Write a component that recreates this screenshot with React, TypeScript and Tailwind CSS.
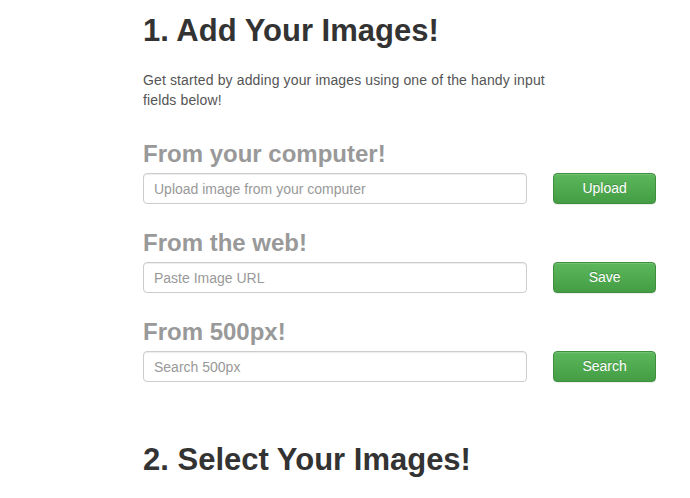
const sources = [
  { title: "From your computer!", placeholder: "Upload image from your computer", action: "Upload" },
  { title: "From the web!", placeholder: "Paste Image URL", action: "Save" },
  { title: "From 500px!", placeholder: "Search 500px", action: "Search" },
];

export default function App() {
  return (
    <div className="min-h-[498px] bg-white font-['Liberation_Sans',Arial,sans-serif] text-[14px] text-[#333]">
      <div className="ml-[143px] w-[513px] pt-[14px]">
        <h1 className="text-[31px] font-bold leading-[33px] text-[#333]">1. Add Your Images!</h1>

        <p className="mt-[23px] w-[425px] text-[14px] leading-[20px] tracking-[0.13px] text-[#555]">
          Get started by adding your images using one of the handy input fields below!
        </p>

        <div className="mt-[31px] flex flex-col gap-[26px]">
          {sources.map((s) => (
            <div key={s.action}>
              <h3 className="text-[24px] font-bold leading-[26px] text-[#999]">{s.title}</h3>
              <div className="mt-[6px] flex items-center gap-[26px]">
                <input
                  type="text"
                  placeholder={s.placeholder}
                  className="h-[31px] w-[385px] rounded-[4px] border border-[#ccc] px-[10px] text-[14px] text-[#555] shadow-[inset_0_1px_1px_rgba(0,0,0,0.075)] outline-none placeholder:text-[#999]"
                />
                <button className="h-[31px] w-[103px] rounded-[4px] border border-[#3e8f3e] bg-gradient-to-b from-[#5cb85c] to-[#449d44] text-[14px] text-white shadow-[inset_0_1px_0_rgba(255,255,255,0.15),0_1px_1px_rgba(0,0,0,0.075)] [text-shadow:0_-1px_0_rgba(0,0,0,0.2)]">
                  {s.action}
                </button>
              </div>
            </div>
          ))}
        </div>

        <h1 className="mt-[61px] text-[31px] font-bold leading-[33px] text-[#333]">2. Select Your Images!</h1>
      </div>
    </div>
  );
}
